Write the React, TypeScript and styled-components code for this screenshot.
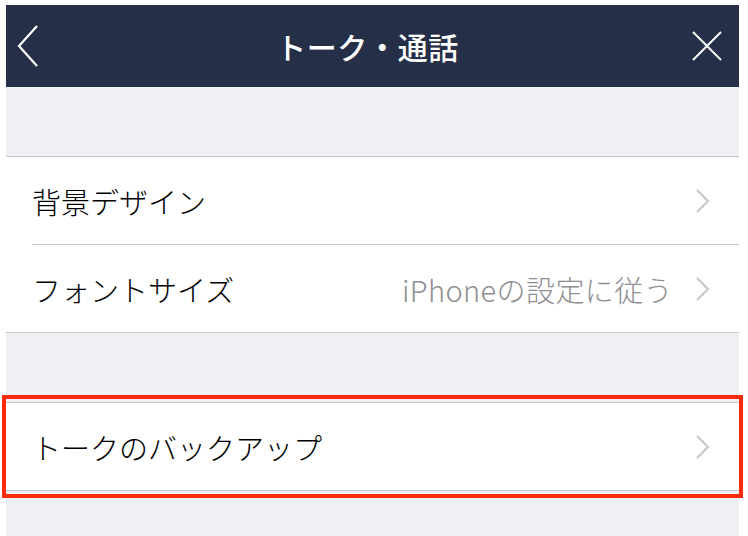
import React from 'react';
import styled, { createGlobalStyle } from 'styled-components';

interface IRowProps {
  label: string;
  value?: string;
  divider?: boolean;
}

const ChevronRight: React.FC = () => (
  <svg width="16" height="26" viewBox="0 0 16 26">
    <polyline points="2,2 13,13 2,24" fill="none" stroke="#c7c7cc" strokeWidth="2.2" />
  </svg>
);

const Row: React.FC<IRowProps> = ({ label, value, divider }) => {
  return (
    <RowWrapper>
      <RowInner divider={divider}>
        <RowLabel>{label}</RowLabel>
        <RowRight>
          {value && <RowValue>{value}</RowValue>}
          <ChevronRight />
        </RowRight>
      </RowInner>
    </RowWrapper>
  );
};

const App: React.FC = () => {
  return (
    <>
      <GlobalStyle />
      <Page>
        <Screen>
          <Header>
            <HeaderButton>
              <svg width="24" height="44" viewBox="0 0 24 44">
                <polyline points="21,2 3,22 21,42" fill="none" stroke="#ffffff" strokeWidth="2.2" />
              </svg>
            </HeaderButton>
            <HeaderTitle>トーク・通話</HeaderTitle>
            <HeaderButton>
              <svg width="32" height="32" viewBox="0 0 32 32">
                <line x1="2" y1="2" x2="30" y2="30" stroke="#ffffff" strokeWidth="2" />
                <line x1="30" y1="2" x2="2" y2="30" stroke="#ffffff" strokeWidth="2" />
              </svg>
            </HeaderButton>
          </Header>
          <Spacer />
          <Group>
            <Row label="背景デザイン" divider />
            <Row label="フォントサイズ" value="iPhoneの設定に従う" />
          </Group>
          <Spacer />
          <Highlight>
            <Group>
              <Row label="トークのバックアップ" />
            </Group>
          </Highlight>
          <Spacer grow />
        </Screen>
      </Page>
    </>
  );
};

export default App;

const GlobalStyle = createGlobalStyle`
  body {
    margin: 0;
    background: #ffffff;
    font-family: "Noto Sans CJK JP", "Noto Sans", sans-serif;
  }
`;

const Page = styled.div`
  height: 536px;
  padding: 5px 9px 0 6px;
  box-sizing: border-box;
  background: #ffffff;
  display: flex;
`;

const Screen = styled.div`
  flex: 1;
  display: flex;
  flex-direction: column;
  background: #efeff4;
`;

const Header = styled.div`
  height: 82px;
  flex-shrink: 0;
  background: #252f47;
  display: flex;
  align-items: center;
  justify-content: space-between;
  padding: 0 12px 0 2px;
`;

const HeaderButton = styled.div`
  width: 40px;
  display: flex;
  align-items: center;
  justify-content: center;
`;

const HeaderTitle = styled.div`
  color: #ffffff;
  font-size: 30px;
  font-weight: 500;
  letter-spacing: 0.5px;
`;

const Spacer = styled.div<{ grow?: boolean }>`
  height: ${({ grow }) => (grow ? 'auto' : '69px')};
  flex: ${({ grow }) => (grow ? '1' : '0 0 auto')};
`;

const Group = styled.div`
  background: #ffffff;
  border-top: 1px solid #c8c7cc;
  border-bottom: 1px solid #c8c7cc;
`;

const Highlight = styled.div`
  position: relative;

  &::after {
    content: '';
    position: absolute;
    left: -4px;
    right: -4px;
    top: -7px;
    bottom: -7px;
    border: 4px solid #fb2a0a;
    pointer-events: none;
  }
`;

const RowWrapper = styled.div`
  padding-left: 26px;
`;

const RowInner = styled.div<{ divider?: boolean }>`
  height: 87px;
  display: flex;
  align-items: center;
  justify-content: space-between;
  padding-right: 28px;
  border-bottom: ${({ divider }) => (divider ? '1px solid #c8c7cc' : 'none')};
`;

const RowLabel = styled.div`
  font-size: 29px;
  color: #000000;
  font-weight: 300;
`;

const RowRight = styled.div`
  display: flex;
  align-items: center;
  gap: 22px;
`;

const RowValue = styled.div`
  font-size: 29px;
  color: #8e8e93;
  font-weight: 300;
  letter-spacing: 0.4px;
`;
